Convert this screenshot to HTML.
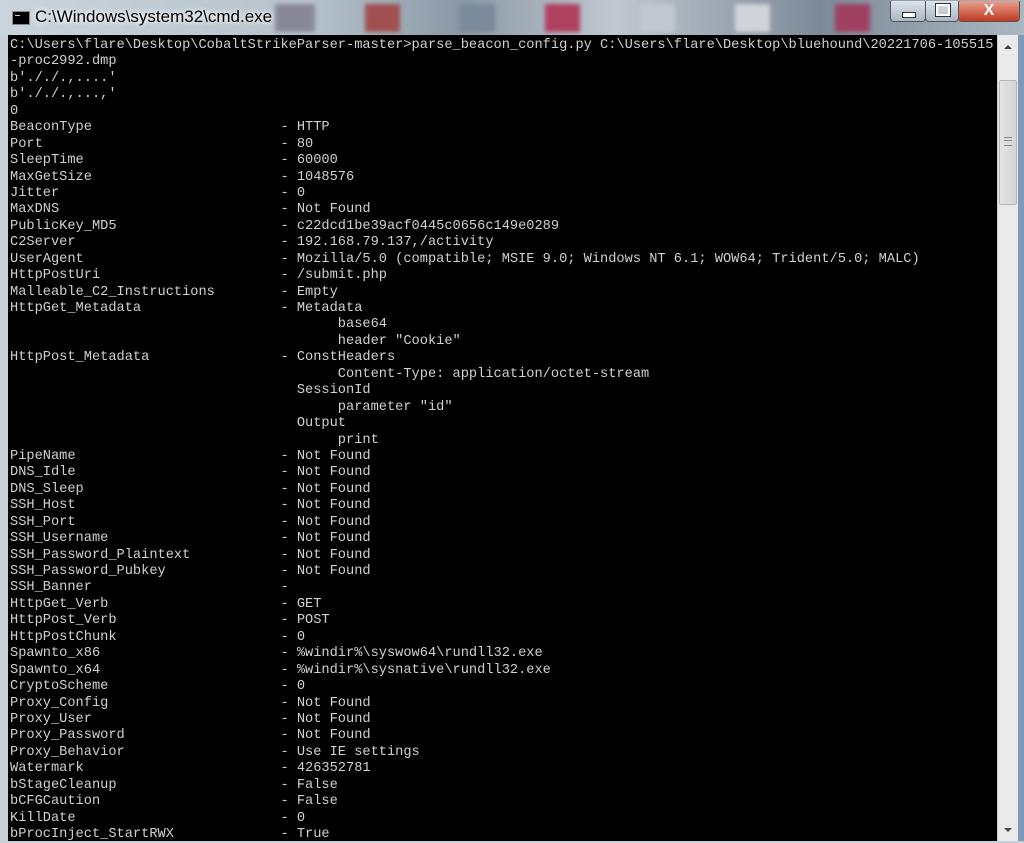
<!DOCTYPE html>
<html><head><style>
html,body{margin:0;padding:0;width:1024px;height:841px;overflow:hidden;background:#c8d0d8;}
.title{position:absolute;left:0;top:0;width:1024px;height:36px;background:linear-gradient(90deg,#c9d4dd 0%,#b7c3cc 30%,#8a98a6 45%,#c0c8cf 60%,#7d8a98 80%,#aab6c2 100%);}
.blk{position:absolute;height:28px;top:4px;filter:blur(2px);}
.ttext{position:absolute;left:35px;top:7px;font:17px "Liberation Sans",sans-serif;color:#000;text-shadow:0 0 6px #fff,0 0 6px #fff;}
.ico{position:absolute;left:12px;top:11px;width:16px;height:12px;background:#000;border:1px solid #888;}
.ico:after{content:"";position:absolute;left:2px;top:3px;width:5px;height:1px;background:#ccc;}
.btn{position:absolute;top:1px;height:20px;border:1px solid #555;border-top:none;border-radius:0 0 4px 4px;}
.con{position:absolute;left:8px;top:35px;width:989px;height:806px;background:#000;}
pre{position:absolute;left:10px;top:38px;margin:0;font:13.67px/16.44px "Liberation Mono",monospace;color:#d0d0d0;white-space:pre;}
.sb{position:absolute;left:997px;top:35px;width:21px;height:806px;background:#eaeaea;border-left:1px solid #ccc;}
.thumb{position:absolute;left:999px;top:80px;width:18px;height:125px;background:linear-gradient(90deg,#e4e4e4,#d4d4d4);border:1px solid #b5b5b5;box-sizing:border-box;border-radius:2px;}
.rf{position:absolute;left:1018px;top:35px;width:6px;height:806px;background:#7d9ab8;}
</style></head><body>
<div class="title">
<div class="blk" style="left:275px;width:40px;background:#889;"></div>
<div class="blk" style="left:365px;width:35px;background:#a05050;"></div>
<div class="blk" style="left:460px;width:35px;background:#7a8a9a;"></div>
<div class="blk" style="left:545px;width:35px;background:#b04060;"></div>
<div class="blk" style="left:640px;width:35px;background:#c0c8d0;"></div>
<div class="blk" style="left:735px;width:35px;background:#d0d4d8;"></div>
<div class="blk" style="left:835px;width:35px;background:#a04060;"></div>
</div>
<div class="ico"></div>
<div class="ttext">C:\Windows\system32\cmd.exe</div>
<div class="btn" style="left:890px;width:34px;background:linear-gradient(#dde4ec,#a9b6c4);"><div style="position:absolute;left:11px;top:11px;width:12px;height:4px;background:#fff;border:1px solid #333;"></div></div>
<div class="btn" style="left:925px;width:32px;background:linear-gradient(#dde4ec,#a9b6c4);"><div style="position:absolute;left:10px;top:3px;width:10px;height:8px;border:2px solid #fff;outline:1px solid #333;"></div></div>
<div class="btn" style="left:958px;width:60px;background:linear-gradient(#e8a090,#c03a22);color:#fff;font:bold 16px 'Liberation Sans',sans-serif;text-align:center;line-height:20px;">X</div>
<div class="con"></div>
<pre>C:\Users\flare\Desktop\CobaltStrikeParser-master>parse_beacon_config.py C:\Users\flare\Desktop\bluehound\20221706-105515
-proc2992.dmp
b'././.,....'
b'././.,...,'
0
BeaconType                       - HTTP
Port                             - 80
SleepTime                        - 60000
MaxGetSize                       - 1048576
Jitter                           - 0
MaxDNS                           - Not Found
PublicKey_MD5                    - c22dcd1be39acf0445c0656c149e0289
C2Server                         - 192.168.79.137,/activity
UserAgent                        - Mozilla/5.0 (compatible; MSIE 9.0; Windows NT 6.1; WOW64; Trident/5.0; MALC)
HttpPostUri                      - /submit.php
Malleable_C2_Instructions        - Empty
HttpGet_Metadata                 - Metadata
                                        base64
                                        header "Cookie"
HttpPost_Metadata                - ConstHeaders
                                        Content-Type: application/octet-stream
                                   SessionId
                                        parameter "id"
                                   Output
                                        print
PipeName                         - Not Found
DNS_Idle                         - Not Found
DNS_Sleep                        - Not Found
SSH_Host                         - Not Found
SSH_Port                         - Not Found
SSH_Username                     - Not Found
SSH_Password_Plaintext           - Not Found
SSH_Password_Pubkey              - Not Found
SSH_Banner                       -
HttpGet_Verb                     - GET
HttpPost_Verb                    - POST
HttpPostChunk                    - 0
Spawnto_x86                      - %windir%\syswow64\rundll32.exe
Spawnto_x64                      - %windir%\sysnative\rundll32.exe
CryptoScheme                     - 0
Proxy_Config                     - Not Found
Proxy_User                       - Not Found
Proxy_Password                   - Not Found
Proxy_Behavior                   - Use IE settings
Watermark                        - 426352781
bStageCleanup                    - False
bCFGCaution                      - False
KillDate                         - 0
bProcInject_StartRWX             - True</pre>
<div class="sb"><div style="position:absolute;left:6px;top:10px;width:0;height:0;border-left:4px solid transparent;border-right:4px solid transparent;border-bottom:4px solid #444;"></div><div style="position:absolute;left:6px;top:793px;width:0;height:0;border-left:4px solid transparent;border-right:4px solid transparent;border-top:4px solid #444;"></div></div>
<div class="thumb"><div style="position:absolute;left:4px;top:56px;width:8px;height:7px;border-top:1px solid #888;border-bottom:1px solid #888;"></div><div style="position:absolute;left:4px;top:59px;width:8px;height:1px;background:#888;"></div></div>
<div class="rf"></div>
</body></html>
